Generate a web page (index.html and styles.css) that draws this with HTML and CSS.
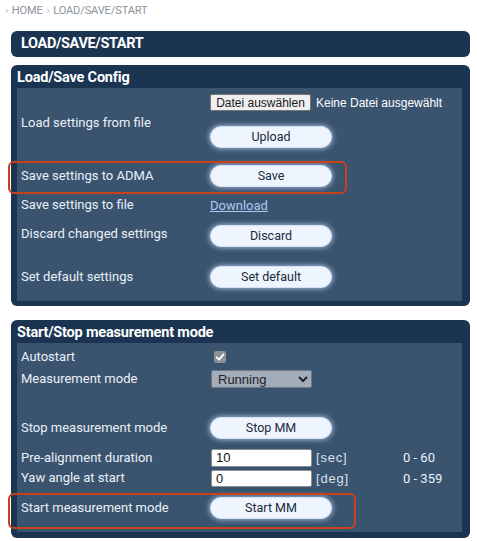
FILE: index.html
```html
<!DOCTYPE html>
<html lang="de">
<head>
<meta charset="utf-8">
<title>LOAD/SAVE/START</title>
<link rel="stylesheet" href="styles.css">
</head>
<body>
<div class="page">
  <nav class="crumbs"><span class="sep">›</span> HOME <span class="sep">›</span> LOAD/SAVE/START</nav>
  <div class="title">LOAD/SAVE/START</div>

  <section class="card">
    <h2 class="card-head">Load/Save Config</h2>
    <div class="panel panel-config">
      <div class="row row-load">
        <div class="label">Load settings from file</div>
        <div class="value stack">
          <div class="file"><span class="file-btn">Datei auswählen</span><span class="file-name">Keine Datei ausgewählt</span></div>
          <button class="btn" type="button">Upload</button>
        </div>
      </div>
      <div class="row row-save highlight">
        <div class="label">Save settings to ADMA</div>
        <div class="value"><button class="btn" type="button">Save</button></div>
      </div>
      <div class="row row-download">
        <div class="label">Save settings to file</div>
        <div class="value"><a class="link" href="#">Download</a></div>
      </div>
      <div class="row row-discard">
        <div class="label">Discard changed settings</div>
        <div class="value"><button class="btn" type="button">Discard</button></div>
      </div>
      <div class="row row-default">
        <div class="label">Set default settings</div>
        <div class="value"><button class="btn" type="button">Set default</button></div>
      </div>
    </div>
  </section>

  <section class="card card-mm">
    <h2 class="card-head">Start/Stop measurement mode</h2>
    <div class="panel panel-mm">
      <div class="row row-auto">
        <div class="label">Autostart</div>
        <div class="value"><span class="check"><svg viewBox="0 0 12 12" width="12" height="12"><path d="M2.6 6.3 L5 8.6 L9.6 3.4" fill="none" stroke="#fff" stroke-width="1.8" stroke-linecap="round" stroke-linejoin="round"/></svg></span></div>
      </div>
      <div class="row row-mode">
        <div class="label">Measurement mode</div>
        <div class="value"><select class="select"><option>Running</option></select></div>
      </div>
      <div class="row row-spacer"></div>
      <div class="row row-stop">
        <div class="label">Stop measurement mode</div>
        <div class="value"><button class="btn" type="button">Stop MM</button></div>
      </div>
      <div class="row row-pre">
        <div class="label">Pre-alignment duration</div>
        <div class="value inline"><input class="field" type="text" value="10"><span class="unit">[sec]</span><span class="range">0 - 60</span></div>
      </div>
      <div class="row row-yaw">
        <div class="label">Yaw angle at start</div>
        <div class="value inline"><input class="field" type="text" value="0"><span class="unit">[deg]</span><span class="range">0 - 359</span></div>
      </div>
      <div class="row row-start highlight">
        <div class="label">Start measurement mode</div>
        <div class="value"><button class="btn" type="button">Start MM</button></div>
      </div>
    </div>
  </section>
</div>
</body>
</html>
```

FILE: styles.css
```css
* { box-sizing: border-box; }

html, body {
  margin: 0;
  padding: 0;
  background: #ffffff;
}

body {
  font-family: "Roboto", "Liberation Sans", sans-serif;
  color: #eaf0f6;
}

.page {
  padding: 0 7px 0 11px;
}

.crumbs {
  height: 31px;
  padding: 4px 0 0 0;
  margin-left: -7px;
  font-size: 11px;
  line-height: 14px;
  color: #8b939b;
  letter-spacing: -0.1px;
}

.crumbs .sep {
  color: #a9c3dc;
  padding: 0 1px;
}

.title {
  height: 26px;
  background: #1a3452;
  border-radius: 6px;
  padding: 0 10px;
  font-weight: 700;
  font-size: 14.5px;
  letter-spacing: -0.35px;
  line-height: 26px;
  color: #ffffff;
}

.card {
  margin-top: 8px;
  background: #1a3452;
  border-radius: 6px;
  padding: 0 8px 5px 6px;
}

.card-mm {
  margin-top: 14px;
  padding-bottom: 6px;
}

.card-head {
  margin: 0;
  height: 23px;
  line-height: 26px;
  font-size: 14.5px;
  font-weight: 700;
  letter-spacing: -0.2px;
  color: #ffffff;
}

.panel {
  background: #3a5470;
  padding: 0 0 3px 4px;
}

.panel-mm {
  padding-top: 3px;
  padding-bottom: 4px;
}

.row {
  position: relative;
  display: flex;
  align-items: center;
}

.label {
  width: 189px;
  flex: none;
  font-size: 13px;
  line-height: 16px;
  color: #eaf0f6;
}

.value {
  display: flex;
  align-items: center;
}

.stack {
  align-self: flex-start;
  flex-direction: column;
  align-items: flex-start;
  gap: 15px;
  padding-top: 6px;
}

.row-load { height: 70px; }
.row-save { height: 36px; }
.row-download { height: 22px; }
.row-discard { height: 40px; }
.row-default { height: 42px; }

.row-auto { height: 22px; }
.row-mode { height: 22px; }
.row-spacer { height: 18px; }
.row-stop { height: 39px; }
.row-pre { height: 21px; }
.row-yaw { height: 20px; }
.row-start { height: 40px; }

.row-discard .label { margin-top: -4px; }

.highlight::after {
  content: "";
  position: absolute;
  left: -13px;
  top: 3px;
  width: 335px;
  height: 29px;
  border: 2px solid #c8401c;
  border-radius: 6px;
  pointer-events: none;
}

.row-start.highlight::after {
  top: 5px;
  width: 344px;
  height: 32px;
}

.file {
  display: flex;
  align-items: center;
  height: 17px;
  font-family: "Liberation Sans", Arial, sans-serif;
  font-size: 12px;
}

.file-btn {
  height: 17px;
  width: 101px;
  display: flex;
  align-items: center;
  justify-content: center;
  background: #efefef;
  border: 1px solid #767676;
  border-radius: 2px;
  color: #1a1a1a;
}

.file-name {
  margin-left: 5px;
  color: #ffffff;
}

.btn {
  width: 122px;
  height: 22px;
  padding: 0;
  border: 1px solid #d2e2f8;
  border-radius: 11px;
  background: #eef5ff;
  box-shadow: 0 0 5px 1px rgba(210, 228, 255, 0.65);
  font-family: "Roboto", "Liberation Sans", sans-serif;
  font-size: 12.5px;
  color: #1c2a3a;
  line-height: 20px;
}

.link {
  font-size: 13px;
  color: #a9c9ef;
  text-decoration: underline;
}

.check {
  display: flex;
  align-items: center;
  justify-content: center;
  width: 12px;
  height: 12px;
  margin-left: 4px;
  background: #8b9096;
  border-radius: 2px;
}

.select {
  width: 101px;
  height: 18px;
  margin-left: 1px;
  padding: 0 0 0 2px;
  background-color: #a3adb9;
  border: 1px solid #6c7989;
  border-radius: 2px;
  font-family: "Liberation Sans", Arial, sans-serif;
  font-size: 13px;
  color: #1e2228;
}

.inline { align-items: center; }

.field {
  width: 101px;
  height: 18px;
  margin: 0 0 0 1px;
  padding: 0 4px;
  border: 1px solid #8a8f96;
  border-radius: 2px;
  background: #ffffff;
  font-family: "Liberation Sans", Arial, sans-serif;
  font-size: 13px;
  color: #111;
}

.row-yaw .field { height: 17px; }

.unit {
  width: 87px;
  margin-left: 4px;
  font-family: "Liberation Sans", Arial, sans-serif;
  font-size: 13px;
  letter-spacing: 0.8px;
  color: #d9e1ea;
}

.range {
  font-size: 13px;
  color: #eaf0f6;
}
```
